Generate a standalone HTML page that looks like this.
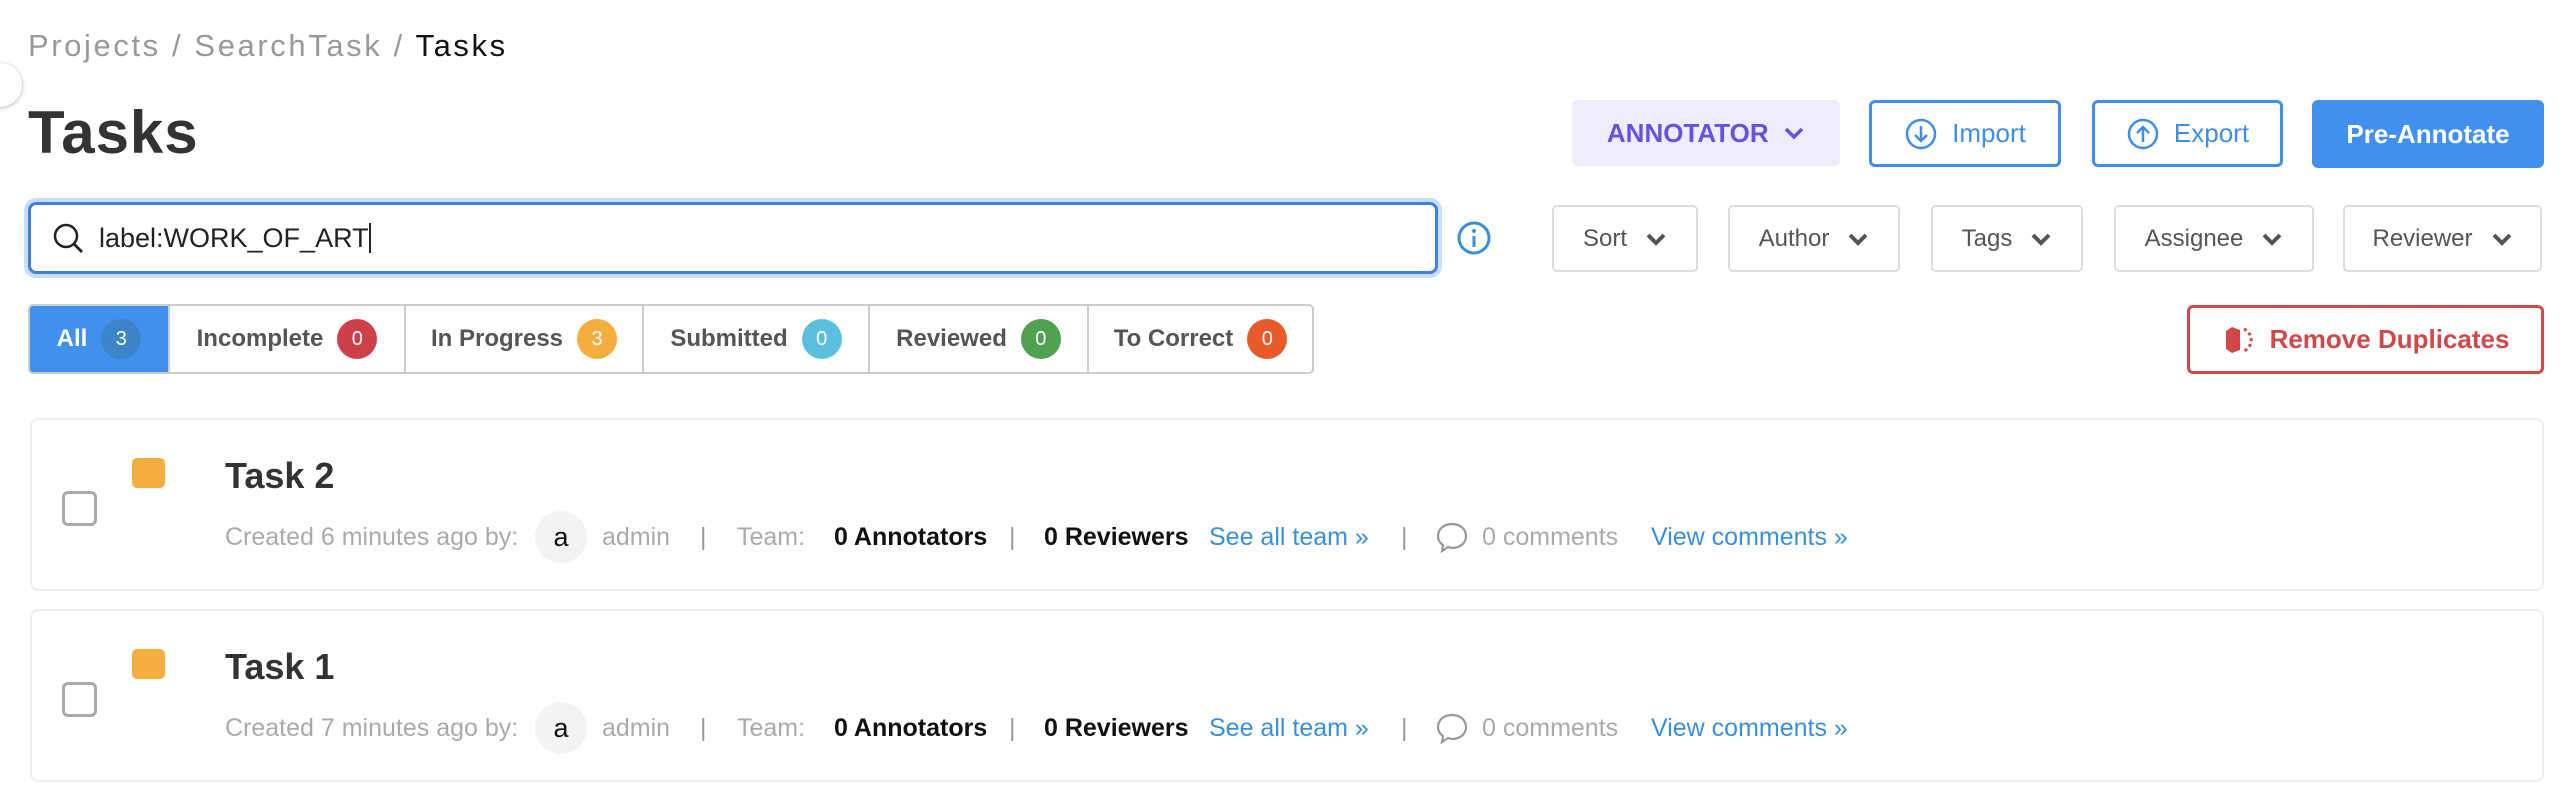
<!DOCTYPE html>
<html><head><meta charset="utf-8"><style>
*{box-sizing:border-box;margin:0;padding:0}
body{width:2573px;height:812px;background:#fff;font-family:"Liberation Sans",sans-serif;position:relative;overflow:hidden;color:#333}
.a{position:absolute}
.crumb{left:28px;top:28px;font-size:31px;letter-spacing:2.6px;color:#999}
.crumb b{color:#111;font-weight:normal}
.title{left:28px;top:98px;font-size:60px;font-weight:bold;color:#333;letter-spacing:1px}
.btn{position:absolute;display:flex;align-items:center;justify-content:center;font-size:26px;font-weight:bold;border-radius:6px}
.ob{border:3px solid #3f8ee8;color:#3f8ee8;background:#fff}
.fb{position:absolute;top:205px;height:67px;border:2px solid #ddd;border-radius:5px;display:flex;align-items:center;justify-content:center;font-size:24px;color:#555;gap:18px}
.tabs{left:28px;top:304px;height:70px;display:flex;border:2px solid #ccc;border-radius:5px;overflow:hidden}
.tab{display:flex;align-items:center;justify-content:center;gap:14px;font-size:24px;font-weight:bold;color:#555;border-left:2px solid #ccc}
.badge{width:40px;height:40px;border-radius:20px;color:#fff;font-size:20px;font-weight:normal;display:flex;align-items:center;justify-content:center}
.card{position:absolute;left:30px;width:2514px;height:173px;border:2px solid #eee;border-radius:8px}
.cb{position:absolute;left:30px;top:71px;width:35px;height:35px;border:3px solid #aaa;border-radius:6px}
.sq{position:absolute;left:100px;top:38px;width:33px;height:30px;background:#f4ae3f;border-radius:5px}
.tt{position:absolute;left:193px;top:35px;font-size:36px;font-weight:bold;color:#333}
.meta{position:absolute;left:0;top:91px;width:100%;height:52px;font-size:25px;color:#aaa;white-space:nowrap}
.meta>*{position:absolute;top:0;height:52px;line-height:52px}
.av{width:52px;border-radius:26px;background:#f3f3f3;color:#111;text-align:center;font-size:27px}
.sep{color:#999}
.bk{color:#111;font-weight:bold}
.lk{color:#3a8fdc}
.meta svg{top:9px;height:34px}
</style></head><body>
<div class="a" style="left:-22px;top:63px;width:44px;height:44px;border-radius:22px;background:#fff;box-shadow:0 1px 4px rgba(0,0,0,.3)"></div>
<div class="a crumb">Projects / SearchTask / <b>Tasks</b></div>
<div class="a title">Tasks</div>

<div class="btn" style="left:1572px;top:100px;width:268px;height:66px;background:#efedfd;color:#6b4fe0">ANNOTATOR&nbsp;&nbsp;<svg width="22" height="14" viewBox="0 0 22 14"><path d="M3 3l8 8 8-8" stroke="#6b4fe0" stroke-width="3.5" fill="none"/></svg></div>
<div class="btn ob" style="left:1869px;top:100px;width:192px;height:67px;gap:14px;font-weight:normal"><svg width="34" height="34" viewBox="0 0 34 34"><circle cx="17" cy="17" r="14" stroke="#3f8ee8" stroke-width="2.5" fill="none"/><path d="M17 9v15M11 18l6 6 6-6" stroke="#3f8ee8" stroke-width="2.5" fill="none"/></svg>Import</div>
<div class="btn ob" style="left:2092px;top:100px;width:191px;height:67px;gap:14px;font-weight:normal"><svg width="34" height="34" viewBox="0 0 34 34"><circle cx="17" cy="17" r="14" stroke="#3f8ee8" stroke-width="2.5" fill="none"/><path d="M17 25V10M11 16l6-6 6 6" stroke="#3f8ee8" stroke-width="2.5" fill="none"/></svg>Export</div>
<div class="btn" style="left:2312px;top:100px;width:232px;height:68px;background:#4290ed;color:#fff">Pre-Annotate</div>

<div class="a" style="left:28px;top:202px;width:1410px;height:72px;border:3px solid #3f7fe0;border-radius:8px;box-shadow:0 0 0 4px #c9defc;display:flex;align-items:center;font-size:27px;color:#222">
<svg style="margin:0 14px 0 20px" width="34" height="34" viewBox="0 0 34 34"><circle cx="15" cy="15" r="11" stroke="#222" stroke-width="2.5" fill="none"/><path d="M23 23l8 8" stroke="#222" stroke-width="2.8"/></svg>label:WORK_OF_ART<span style="display:inline-block;width:2px;height:30px;background:#222"></span></div>
<svg class="a" style="left:1456px;top:220px" width="36" height="36" viewBox="0 0 36 36"><circle cx="18" cy="18" r="15" stroke="#3a8fdc" stroke-width="3" fill="none"/><circle cx="18" cy="11" r="2" fill="#3a8fdc"/><path d="M18 16v11" stroke="#3a8fdc" stroke-width="3"/></svg>

<div class="fb" style="left:1552px;width:146px">Sort <svg width="22" height="14" viewBox="0 0 22 14"><path d="M3 3l8 8 8-8" stroke="#555" stroke-width="4" fill="none"/></svg></div>
<div class="fb" style="left:1728px;width:172px">Author <svg width="22" height="14" viewBox="0 0 22 14"><path d="M3 3l8 8 8-8" stroke="#555" stroke-width="4" fill="none"/></svg></div>
<div class="fb" style="left:1931px;width:152px">Tags <svg width="22" height="14" viewBox="0 0 22 14"><path d="M3 3l8 8 8-8" stroke="#555" stroke-width="4" fill="none"/></svg></div>
<div class="fb" style="left:2114px;width:200px">Assignee <svg width="22" height="14" viewBox="0 0 22 14"><path d="M3 3l8 8 8-8" stroke="#555" stroke-width="4" fill="none"/></svg></div>
<div class="fb" style="left:2343px;width:199px">Reviewer <svg width="22" height="14" viewBox="0 0 22 14"><path d="M3 3l8 8 8-8" stroke="#555" stroke-width="4" fill="none"/></svg></div>

<div class="a tabs">
<div class="tab" style="width:138px;background:#4290ed;color:#fff;border-left:none">All <span class="badge" style="background:#3a86c8">3</span></div>
<div class="tab" style="width:236px">Incomplete <span class="badge" style="background:#cf3f48">0</span></div>
<div class="tab" style="width:238px">In Progress <span class="badge" style="background:#f4ae3f">3</span></div>
<div class="tab" style="width:226px">Submitted <span class="badge" style="background:#5bc0de">0</span></div>
<div class="tab" style="width:219px">Reviewed <span class="badge" style="background:#4fa24f">0</span></div>
<div class="tab" style="width:225px">To Correct <span class="badge" style="background:#e85a2a">0</span></div>
</div>

<div class="btn" style="left:2187px;top:305px;width:357px;height:69px;border:3px solid #d04848;color:#d04848;gap:14px"><svg width="34" height="34" viewBox="0 0 34 34"><path d="M10 4l8 3v20l-8 3-6-4V8z" fill="#d04848"/><path d="M22 6a12 12 0 0 1 0 22" stroke="#d04848" stroke-width="3" stroke-dasharray="3 3" fill="none"/></svg>Remove Duplicates</div>

<div class="card" style="top:418px"><div class="cb"></div><div class="sq"></div><div class="tt">Task 2</div>
<div class="meta"><span style="left:193px">Created 6 minutes ago by:</span><span class="av" style="left:503px">a</span><span style="left:570px">admin</span><span class="sep" style="left:668px">|</span><span style="left:705px">Team:</span><span class="bk" style="left:802px">0 Annotators</span><span class="sep" style="left:977px">|</span><span class="bk" style="left:1012px">0 Reviewers</span><span class="lk" style="left:1177px">See all team »</span><span class="sep" style="left:1369px">|</span><svg style="left:1403px" width="34" height="34" viewBox="0 0 34 34"><path d="M17 4C9 4 3 9 3 16c0 4 2 7 5 9l-1 6 6-4c1 0 3 1 4 1 8 0 14-5 14-12S25 4 17 4z" stroke="#999" stroke-width="2.2" fill="none"/></svg><span style="left:1450px">0 comments</span><span class="lk" style="left:1619px">View comments »</span></div></div>

<div class="card" style="top:609px"><div class="cb"></div><div class="sq"></div><div class="tt">Task 1</div>
<div class="meta"><span style="left:193px">Created 7 minutes ago by:</span><span class="av" style="left:503px">a</span><span style="left:570px">admin</span><span class="sep" style="left:668px">|</span><span style="left:705px">Team:</span><span class="bk" style="left:802px">0 Annotators</span><span class="sep" style="left:977px">|</span><span class="bk" style="left:1012px">0 Reviewers</span><span class="lk" style="left:1177px">See all team »</span><span class="sep" style="left:1369px">|</span><svg style="left:1403px" width="34" height="34" viewBox="0 0 34 34"><path d="M17 4C9 4 3 9 3 16c0 4 2 7 5 9l-1 6 6-4c1 0 3 1 4 1 8 0 14-5 14-12S25 4 17 4z" stroke="#999" stroke-width="2.2" fill="none"/></svg><span style="left:1450px">0 comments</span><span class="lk" style="left:1619px">View comments »</span></div></div>
</body></html>
